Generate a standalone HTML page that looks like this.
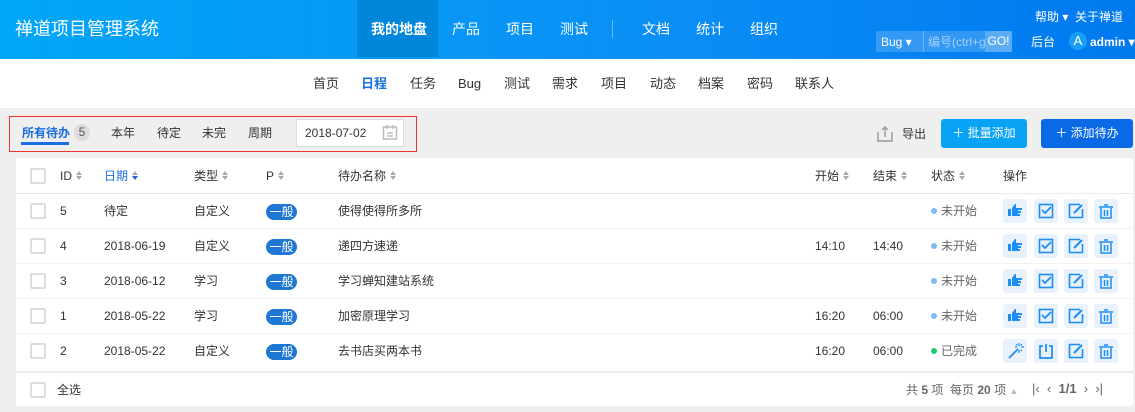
<!DOCTYPE html>
<html><head><meta charset="utf-8"><style>
*{box-sizing:border-box;margin:0;padding:0}
body{width:1135px;height:412px;overflow:hidden;background:#efefef;font-family:"Liberation Sans","Noto Sans CJK SC",sans-serif;font-size:12px;color:#333;position:relative;line-height:16px}
.hdr{position:absolute;left:0;top:0;width:1135px;height:59px;background:linear-gradient(90deg,#00a6f7,#0a8ef5 60%,#0079ef);color:#fff}
.abs{position:absolute;white-space:nowrap;line-height:16px}
.sub{position:absolute;top:59px;left:0;width:1135px;height:49px;background:#fff}
.card{position:absolute;left:16px;top:158px;width:1117px;height:248px;background:#fff;border-radius:3px}
.cb{position:absolute;width:16px;height:16px;border:2px solid #ddd;border-radius:2px;background:#fff}
.sort{display:inline-block;width:7px;height:10px;margin-left:4px;vertical-align:-1px;position:relative}
.sort:before{content:"";position:absolute;left:0;top:0;border:3.5px solid transparent;border-bottom:4px solid #aaa;border-top:0}
.sort:after{content:"";position:absolute;left:0;top:5px;border:3.5px solid transparent;border-top:4px solid #aaa;border-bottom:0}
.sort.act:after{border-top-color:#1a5fe0}
.pri{position:absolute;width:31px;height:16px;background:#1e77d3;color:#fff;border-radius:8px;font-size:12px;text-align:center;line-height:16px}
.btn{position:absolute;width:24px;height:24px;background:#e8f1fc;border-radius:3px}
.dot{display:inline-block;width:6px;height:6px;border-radius:3px;background:#7bbcf5;margin-right:4px;vertical-align:1px}
.line{position:absolute;left:0;width:1117px;height:1px;background:#eaeaea}
.n14{font-size:14px}
.n13{font-size:13px}
</style></head><body>
<div class="hdr">
<div class="abs" style="left:15px;top:18px;font-size:18px;line-height:22px">禅道项目管理系统</div>
<div class="abs" style="left:357px;top:0;width:81px;height:57px;background:#0087db"></div>
<div class="abs n14" style="left:371px;top:21px;font-weight:bold">我的地盘</div>
<div class="abs n14" style="left:452px;top:21px">产品</div>
<div class="abs n14" style="left:506px;top:21px">项目</div>
<div class="abs n14" style="left:560px;top:21px">测试</div>
<div class="abs" style="left:612px;top:20px;width:1px;height:18px;background:rgba(255,255,255,.4)"></div>
<div class="abs n14" style="left:642px;top:21px">文档</div>
<div class="abs n14" style="left:696px;top:21px">统计</div>
<div class="abs n14" style="left:750px;top:21px">组织</div>
<div class="abs" style="left:1035px;top:9px;font-size:12px">帮助 ▾&nbsp; 关于禅道</div>
<div class="abs" style="left:876px;top:31px;width:136px;height:21px;background:rgba(255,255,255,.18);border-radius:2px"></div>
<div class="abs" style="left:881px;top:34px;font-size:12px">Bug ▾</div>
<div class="abs" style="left:923px;top:31px;width:1px;height:21px;background:rgba(255,255,255,.3)"></div>
<div class="abs" style="left:928px;top:34px;font-size:12px;color:rgba(255,255,255,.55);width:57px;overflow:hidden">编号(ctrl+g</div>
<div class="abs" style="left:985px;top:31px;width:27px;height:21px;background:rgba(255,255,255,.22);font-size:12px;line-height:21px;text-align:center">GO!</div>
<div class="abs" style="left:1031px;top:34px;font-size:12px">后台</div>
<div class="abs" style="left:1069px;top:32px;width:18px;height:18px;border-radius:9px;background:#18a0f5;text-align:center;line-height:18px;font-size:13px">A</div>
<div class="abs" style="left:1090px;top:34px;font-size:12px;font-weight:bold">admin ▾</div>
</div>
<div class="sub">
<div class="abs n13" style="left:313px;top:17px">首页</div>
<div class="abs n13" style="left:361px;top:17px;color:#1a6fe0;font-weight:bold">日程</div>
<div class="abs n13" style="left:410px;top:17px">任务</div>
<div class="abs n13" style="left:458px;top:17px">Bug</div>
<div class="abs n13" style="left:504px;top:17px">测试</div>
<div class="abs n13" style="left:552px;top:17px">需求</div>
<div class="abs n13" style="left:601px;top:17px">项目</div>
<div class="abs n13" style="left:650px;top:17px">动态</div>
<div class="abs n13" style="left:698px;top:17px">档案</div>
<div class="abs n13" style="left:747px;top:17px">密码</div>
<div class="abs n13" style="left:795px;top:17px">联系人</div>
</div>
<div class="abs" style="left:9px;top:116px;width:408px;height:36px;border:1px solid #e33"></div>
<div class="abs" style="left:22px;top:125px;color:#1a6fe0;font-weight:bold">所有待办</div>
<div class="abs" style="left:21px;top:142px;width:48px;height:3px;background:#1a6fe0"></div>
<div class="abs" style="left:74px;top:124px;width:16px;height:17px;border-radius:8px;background:#ddd;font-size:12px;text-align:center;line-height:17px;color:#555">5</div>
<div class="abs" style="left:111px;top:125px">本年</div>
<div class="abs" style="left:157px;top:125px">待定</div>
<div class="abs" style="left:202px;top:125px">未完</div>
<div class="abs" style="left:248px;top:125px">周期</div>
<div class="abs" style="left:296px;top:119px;width:108px;height:28px;background:#fff;border:1px solid #ddd;border-radius:2px"></div>
<div class="abs" style="left:305px;top:125px">2018-07-02</div>
<svg class="abs" style="left:382px;top:124px" width="16" height="17"><rect x="1.5" y="3" width="13" height="12" fill="none" stroke="#bbb" stroke-width="1.5"/><path d="M5 1v4M11 1v4M5 9h6M5 12h6" stroke="#bbb" stroke-width="1.5"/></svg>
<svg class="abs" style="left:877px;top:125px" width="16" height="17"><path d="M1 7v9h14V7" fill="none" stroke="#999" stroke-width="1.4"/><path d="M8 12V2M5 5l3-3 3 3" fill="none" stroke="#999" stroke-width="1.4"/></svg>
<div class="abs" style="left:902px;top:126px;font-size:12px">导出</div>
<div class="abs" style="left:941px;top:119px;width:86px;height:29px;background:#08a3f5;border-radius:3px;color:#fff;line-height:29px;text-align:center">＋ 批量添加</div>
<div class="abs" style="left:1041px;top:119px;width:92px;height:29px;background:#0a6ae6;border-radius:3px;color:#fff;line-height:29px;text-align:center">＋ 添加待办</div>
<div class="card">
<div class="cb" style="left:14px;top:10px"></div>
<div class="abs" style="left:44px;top:10px">ID<span class="sort"></span></div>
<div class="abs" style="left:88px;top:10px;color:#1a6fe0">日期<span class="sort act"></span></div>
<div class="abs" style="left:178px;top:10px">类型<span class="sort"></span></div>
<div class="abs" style="left:250px;top:10px">P<span class="sort"></span></div>
<div class="abs" style="left:322px;top:10px">待办名称<span class="sort"></span></div>
<div class="abs" style="left:799px;top:10px">开始<span class="sort"></span></div>
<div class="abs" style="left:857px;top:10px">结束<span class="sort"></span></div>
<div class="abs" style="left:915px;top:10px">状态<span class="sort"></span></div>
<div class="abs" style="left:987px;top:10px">操作</div>
<div class="line" style="top:35px"></div>
<div class="line" style="top:213px;height:2px"></div>
<div class="cb" style="left:14px;top:224px"></div>
<div class="abs" style="left:41px;top:224px">全选</div>
<div class="abs" style="left:890px;top:224px;font-size:12px;color:#666">共 <b>5</b> 项 &nbsp;每页 <b>20</b> 项 <span style="color:#bbb;font-size:9px">▲</span></div>
<div class="abs" style="left:1016px;top:223px;font-size:13px;color:#666">|‹ &nbsp;‹ &nbsp;<b>1/1</b> &nbsp;› &nbsp;›|</div>
</div>
<div id="rows"></div>
<script>
var d=[["5","待定","自定义","使得使得所多所","","","未开始"],["4","2018-06-19","自定义","递四方速递","14:10","14:40","未开始"],["3","2018-06-12","学习","学习蝉知建站系统","","","未开始"],["1","2018-05-22","学习","加密原理学习","16:20","06:00","未开始"],["2","2018-05-22","自定义","去书店买两本书","16:20","06:00","已完成"]];
var h="";
var ic={thumb:'<path d="M4 9h3v7H4zM8 8l3-4h1v4h6v2h-4v1h3v2h-3v1h2v2H8z" fill="#1a8ef5"/>',check:'<rect x="4.5" y="4.5" width="13" height="13" fill="none" stroke="#1a8ef5" stroke-width="1.6"/><path d="M7 10l3 3 6-6" fill="none" stroke="#1a8ef5" stroke-width="1.8"/>',edit:'<path d="M15 4.5H4.5v13h13V9" fill="none" stroke="#1a8ef5" stroke-width="1.6"/><path d="M9 13l8-8" stroke="#1a8ef5" stroke-width="2"/>',del:'<path d="M4 7h14M9 5h4M6 8v10h10V8M9.5 10v6M12.5 10v6" fill="none" stroke="#1a8ef5" stroke-width="1.5"/>',wand:'<path d="M5 18l9-9" stroke="#1a8ef5" stroke-width="1.8"/><path d="M15 3v3M15 10v3M11 7h2M17 7h3M12 4l1.5 1.5M18 4l-1.5 1.5M18 11l-1.5-1.5" stroke="#1a8ef5" stroke-width="1.2"/>',pow:'<path d="M8 6H5v12h12V6h-3M11 4v8" fill="none" stroke="#1a8ef5" stroke-width="1.7"/>'};
function b(x,y,k){return '<div class="btn" style="left:'+x+'px;top:'+y+'px"><svg width="24" height="24" viewBox="-1 -1 24 24">'+ic[k]+'</svg></div>';}
d.forEach(function(r,i){var y=193+i*35;var t=y+10;
h+='<div class="cb" style="left:30px;top:'+(y+10)+'px"></div>';
h+='<div class="abs" style="left:60px;top:'+t+'px">'+r[0]+'</div>';
h+='<div class="abs" style="left:104px;top:'+t+'px">'+r[1]+'</div>';
h+='<div class="abs" style="left:194px;top:'+t+'px">'+r[2]+'</div>';
h+='<div class="pri" style="left:266px;top:'+(y+11)+'px">一般</div>';
h+='<div class="abs" style="left:338px;top:'+t+'px">'+r[3]+'</div>';
h+='<div class="abs" style="left:815px;top:'+t+'px">'+r[4]+'</div>';
h+='<div class="abs" style="left:873px;top:'+t+'px">'+r[5]+'</div>';
h+='<div class="abs" style="left:931px;top:'+t+'px;color:#666"><span class="dot" style="'+(r[6]=="已完成"?"background:#1ccb6b":"")+'"></span>'+r[6]+'</div>';
var done=r[6]=="已完成";
h+=b(1003,y+6,done?"wand":"thumb")+b(1034,y+6,done?"pow":"check")+b(1064,y+6,"edit")+b(1094,y+6,"del");
if(i<4)h+='<div class="abs" style="left:16px;top:'+(y+35)+'px;width:1117px;height:1px;background:#f2f2f2"></div>';
});
document.getElementById("rows").innerHTML=h;
</script>
</body></html>
